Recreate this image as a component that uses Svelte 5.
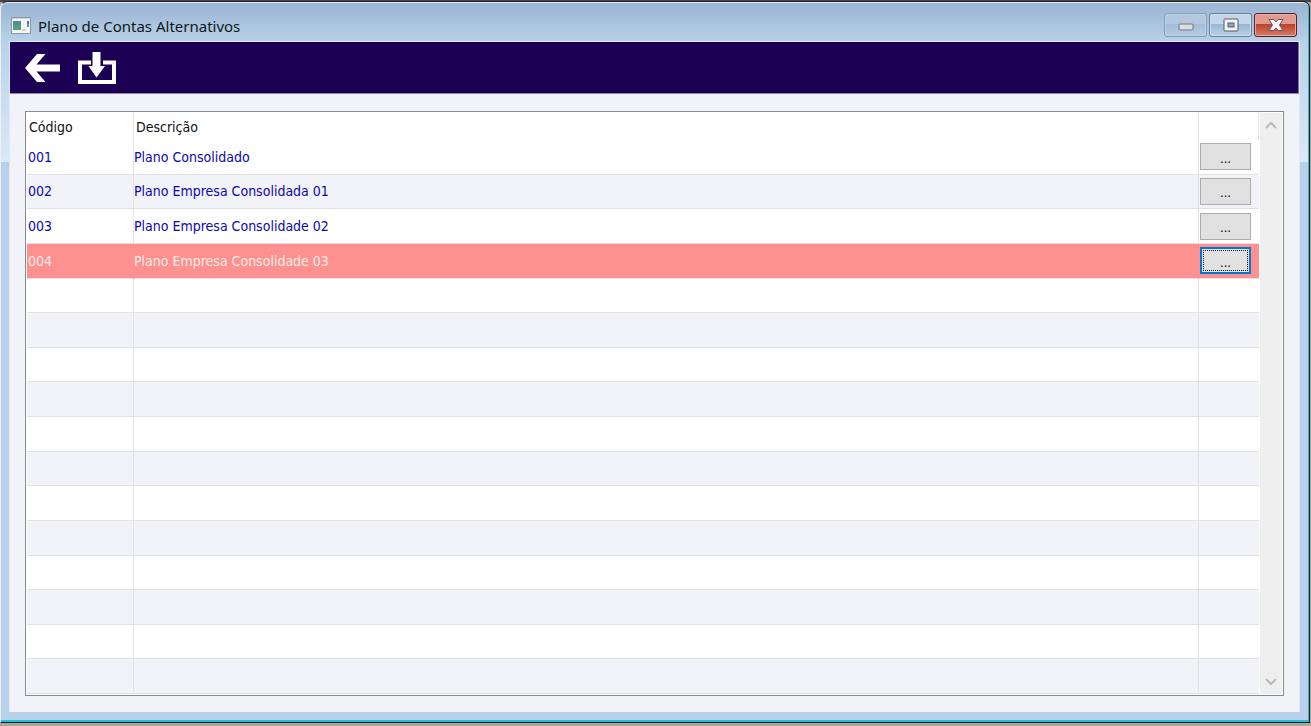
<script>
  const plans = [
    { code: '001', description: 'Plano Consolidado' },
    { code: '002', description: 'Plano Empresa Consolidada 01' },
    { code: '003', description: 'Plano Empresa Consolidade 02' },
    { code: '004', description: 'Plano Empresa Consolidade 03' }
  ];
  const emptyRows = Array(12).fill(null);
  let selected = $state('004');
</script>

<div class="desktop">
  <div class="window">
    <header class="titlebar">
      <svg class="app-icon" width="20" height="17" viewBox="0 0 20 17" aria-hidden="true">
        <rect x="0.5" y="0.5" width="19" height="16" fill="#f6f6f6" stroke="#8b98a5" />
        <rect x="1" y="1" width="18" height="1" fill="#cfd3d6" />
        <rect x="2" y="4" width="8" height="9" fill="#4c8ea0" />
        <rect x="2" y="8" width="8" height="5" fill="#55a274" />
        <rect x="11" y="12" width="4" height="2" fill="#cfcfcf" />
        <rect x="16" y="4" width="2" height="3" fill="#3f74bd" />
        <rect x="16" y="7" width="2" height="3" fill="#59a479" />
      </svg>
      <h1>Plano de Contas Alternativos</h1>
      <div class="controls">
        <button class="minimize" aria-label="Minimizar">
          <svg width="16" height="8" viewBox="0 0 16 8">
            <rect x="1" y="1" width="14" height="6" rx="1" fill="#dcdfe2" stroke="#6f7780" />
          </svg>
        </button>
        <button aria-label="Maximizar">
          <svg width="16" height="14" viewBox="0 0 16 14">
            <rect x="1" y="1" width="14" height="12" rx="1" fill="#f4f4f4" stroke="#565c68" />
            <rect x="5" y="5" width="6" height="4" fill="#8aa9cc" stroke="#565c68" />
          </svg>
        </button>
        <button class="close" aria-label="Fechar">
          <svg width="16" height="14" viewBox="0 0 16 14">
            <path d="M1 1.500h5L8 4l2-2.500h5L11.500 7l3.500 5.500h-5L8 10l-2 2.500H1L4.500 7z" fill="#f4f4f4" stroke="#6b5460" stroke-linejoin="round" />
          </svg>
        </button>
      </div>
    </header>

    <main>
      <nav class="toolbar">
        <button aria-label="Voltar">
          <svg width="35" height="28" viewBox="0 0 35 28">
            <path d="M0 14L12 0h8.500l-9 10.500H35v7H11.500l9 10.500H12z" fill="#fff" />
          </svg>
        </button>
        <button aria-label="Importar">
          <svg width="38" height="32" viewBox="0 0 38 32">
            <path d="M13 10.500H2V30h34V10.500H25" fill="none" stroke="#fff" stroke-width="4" />
            <path d="M14.500 0h8v14h4.500l-8.500 11.500L10.500 14h4z" fill="#fff" />
          </svg>
        </button>
      </nav>

      <div class="content">
        <div class="grid">
          <table>
            <thead>
              <tr>
                <th class="code">Código</th>
                <th>Descrição</th>
                <th class="action" aria-label="Ações"></th>
              </tr>
            </thead>
            <tbody>
              {#each plans as plan}
                <tr class:selected={selected === plan.code} onclick={() => (selected = plan.code)}>
                  <td>{plan.code}</td>
                  <td>{plan.description}</td>
                  <td><button class="more">...</button></td>
                </tr>
              {/each}
              {#each emptyRows as _}
                <tr>
                  <td></td>
                  <td></td>
                  <td></td>
                </tr>
              {/each}
            </tbody>
          </table>
          <div class="scrollbar">
            <button aria-label="Rolar para cima">
              <svg width="12" height="10" viewBox="0 0 12 10">
                <path d="M1 8l5-5 5 5" fill="none" stroke="#b9b9b9" stroke-width="2" />
              </svg>
            </button>
            <button aria-label="Rolar para baixo">
              <svg width="12" height="10" viewBox="0 0 12 10">
                <path d="M1 2l5 5 5-5" fill="none" stroke="#b9b9b9" stroke-width="2" />
              </svg>
            </button>
          </div>
        </div>
      </div>
    </main>
  </div>
</div>

<style>
  :global(body) {
    margin: 0;
  }

  .desktop {
    box-sizing: border-box;
    height: 100vh;
    padding: 1px 1px 3px 0;
    background: linear-gradient(#4a4548 2px, #a6a4a4 2px);
    font-family: "DejaVu Sans Condensed", "DejaVu Sans", sans-serif;
    font-size: 14px;
  }

  .window {
    box-sizing: border-box;
    display: flex;
    flex-direction: column;
    height: 100%;
    padding: 0 9px 0 8px;
    border: 1px solid #222;
    border-left-color: #e8f2fa;
    border-radius: 7px 7px 0 0;
    background:
      linear-gradient(#99b4d1, #b9d1ea 40px, transparent 40px),
      linear-gradient(#b9d1ea 40px, #dce9f6 160px, #b9d1ea 160px);
    box-shadow: inset -1px -2px 0 #25bfd3, inset 0 1px 0 #e6eef6;
  }

  .titlebar {
    display: flex;
    align-items: center;
    height: 39px;
    padding: 0 3px 0 2px;
  }

  .app-icon {
    margin-top: 8px;
  }

  h1 {
    flex: 1;
    margin: 8px 0 0 7px;
    font-family: "Noto Sans", sans-serif;
    font-size: 15px;
    font-weight: 400;
    color: #101820;
  }

  .controls {
    display: flex;
    gap: 2px;
    margin-top: 7px;
  }

  .controls button {
    display: flex;
    align-items: center;
    justify-content: center;
    width: 43px;
    height: 24px;
    padding: 0;
    border: 1px solid #63809f;
    border-radius: 3px;
    background: linear-gradient(#c5d6ea 45%, #9ab5d2 45%, #b9d2ea);
    box-shadow: inset 0 0 0 1px #cfdff0;
  }

  .controls .minimize {
    padding-top: 4px;
    border-color: #829ebb;
    background: linear-gradient(#b3c8de 45%, #a3bcd7 45%, #b5cde6);
    box-shadow: inset 0 0 0 1px #bdd1e6;
  }

  .controls .close {
    border-color: #56202f;
    background: linear-gradient(#e19a8e 45%, #b9402a 45%, #d67c60);
    box-shadow: inset 0 0 0 1px #e8aca2;
  }

  main {
    flex: 1;
    display: flex;
    flex-direction: column;
    min-height: 0;
    margin-bottom: 10px;
    border: 1px solid #dfe9f5;
    border-bottom: 0;
    background: #f2f3f9;
  }

  .toolbar {
    display: flex;
    align-items: center;
    gap: 18px;
    height: 51px;
    padding-left: 15px;
    border-right: 1px solid #77738f;
    border-bottom: 1px solid #8e8b9c;
    background: #1b0053;
  }

  .toolbar button {
    display: flex;
    padding: 0;
    border: 0;
    background: none;
  }

  .content {
    flex: 1;
    display: flex;
    min-height: 0;
    padding: 17px 15px 16px;
  }

  .grid {
    flex: 1;
    display: flex;
    padding: 1px;
    border: 1px solid #888a92;
    background: #fff;
  }

  table {
    flex: 1;
    height: 100%;
    border-collapse: separate;
    border-spacing: 0;
    table-layout: fixed;
  }

  th,
  td {
    box-sizing: border-box;
    padding: 0 0 0 1px;
    border-right: 1px solid #e2e2e4;
    text-align: left;
    font-weight: 400;
  }

  th {
    height: 27px;
    padding-left: 2px;
    color: #111;
  }

  .code {
    width: 107px;
  }

  .action {
    width: 60px;
  }

  /* spare height is shared out between the rows */
  td {
    height: 34px;
    border-bottom: 1px solid #e2e2e4;
    color: #0c08b0;
  }

  td:nth-child(2) {
    padding-left: 0;
  }

  td:last-child {
    border-right: 0;
  }

  tbody tr:nth-child(even) {
    background: #f2f3f9;
  }

  tbody tr.selected {
    background: #ff9090;
  }

  tr.selected td {
    border-right-color: #ff9090;
    color: #ffece6;
  }

  .more {
    display: block;
    width: 51px;
    height: 27px;
    padding: 3px 0 0;
    border: 1px solid #adadad;
    background: #e1e1e1;
    font: inherit;
    font-size: 13px;
    color: #000;
  }

  .selected .more {
    border: 2px solid #0078d7;
    outline: 1px dotted #111;
    outline-offset: -4px;
  }

  .scrollbar {
    display: flex;
    flex-direction: column;
    justify-content: space-between;
    width: 22px;
    margin-left: 1px;
    background: #efefef;
  }

  .scrollbar button {
    display: flex;
    align-items: center;
    justify-content: center;
    height: 24px;
    padding: 0;
    border: 0;
    background: none;
  }
</style>
